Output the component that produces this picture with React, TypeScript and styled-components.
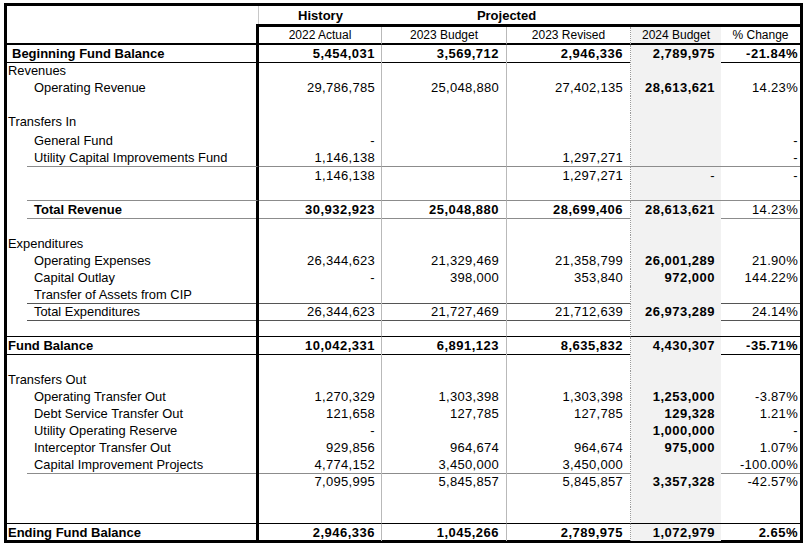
import React from 'react';
import styled, { createGlobalStyle, css } from 'styled-components';

const GlobalStyle = createGlobalStyle`
  html, body { margin: 0; padding: 0; background: #fff; }
  body {
    padding: 3px 0 0 4px;
    font-family: "Liberation Sans", Arial, sans-serif;
    color: #000;
  }
  * { box-sizing: border-box; }
`;

const COLS = '20px 232px 123px 125px 124px 90px 79px';

type ColKey = 'c' | 'd' | 'e' | 'f' | 'g';
type Rule = { w: number; c: string; partial?: boolean };

const Sheet = styled.div`
  width: 799px;
  border: 3px solid #000;
  display: flex;
  flex-direction: column;
`;

const Indent = styled.div`
  border-bottom: none;
`;

const Row = styled.div<{ $h: number; $rule?: Rule; $tall?: boolean }>`
  display: grid;
  grid-template-columns: ${COLS};
  height: ${(p) => p.$h}px;
  && > :not(${Indent}) {
    border-bottom: ${(p) => (p.$rule ? `${p.$rule.w}px solid ${p.$rule.c}` : 'none')};
    align-items: ${(p) => (p.$tall ? 'flex-end' : 'center')};
  }
`;

const TopHeaderRow = styled.div`
  display: grid;
  grid-template-columns: ${COLS};
  height: 21px;
  && > :not(:first-child) {
    border-bottom: 3px solid #000;
  }
`;

const Corner = styled.div<{ $thin?: boolean }>`
  grid-column: 1 / 3;
  border-right: ${(p) => (p.$thin ? '1px solid #c8c8c8' : '3px solid #000')};
  position: relative;
  ${(p) =>
    p.$thin &&
    css`
      &::after {
        content: '';
        position: absolute;
        right: -1px;
        bottom: 0;
        width: 3px;
        height: 3px;
        background: #000;
      }
    `}
`;

const GroupTitle = styled.div<{ $span?: number }>`
  grid-column: span ${(p) => p.$span ?? 1};
  display: flex;
  align-items: center;
  justify-content: center;
  font-size: 13px;
  font-weight: 700;
  line-height: 16px;
  padding-top: 1px;
`;

const Blank = styled.div``;

const colStyles: Record<ColKey, ReturnType<typeof css>> = {
  c: css`
    border-right: 1px solid #b9b9b9;
    padding-right: 6px;
  `,
  d: css`
    border-right: 1px solid #b9b9b9;
    padding-right: 7px;
  `,
  e: css`
    border-right: 1px dotted #9a9a9a;
    padding-right: 7px;
  `,
  f: css`
    background: #f2f2f2;
    padding-right: 6px;
  `,
  g: css`
    padding-right: 2px;
  `,
};

const ColHead = styled.div<{ $col: ColKey }>`
  ${(p) => colStyles[p.$col]};
  display: flex;
  align-items: center;
  justify-content: center;
  padding-right: 0;
  font-size: 12px;
  line-height: 16px;
`;

const Label = styled.div<{ $span?: boolean; $bold?: boolean; $pad: number }>`
  grid-column: ${(p) => (p.$span ? '1 / 3' : 'auto')};
  border-right: 3px solid #000;
  display: flex;
  padding-left: ${(p) => p.$pad}px;
  padding-top: 1px;
  font-size: ${(p) => (p.$bold ? 13 : 12.9)}px;
  font-weight: ${(p) => (p.$bold ? 700 : 400)};
  line-height: 16px;
  white-space: nowrap;
`;

const Value = styled.div<{ $col: ColKey; $bold?: boolean }>`
  ${(p) => colStyles[p.$col]};
  display: flex;
  justify-content: flex-end;
  padding-top: 1px;
  font-size: 13px;
  font-weight: ${(p) => (p.$bold ? 700 : 400)};
  letter-spacing: ${(p) => (p.$bold ? '0.5px' : '0.3px')};
  line-height: 16px;
  white-space: nowrap;
`;

type Cell = string | { t: string; b: true };
const B = (t: string): Cell => ({ t, b: true });

type Kind = 'top' | 'lead' | 'sub' | 'blank';
interface RowSpec {
  kind: Kind;
  label?: string;
  bold?: boolean;
  h: number;
  rule?: Rule;
  tall?: boolean;
  vals?: Cell[];
}

const GRAY: Rule = { w: 1, c: '#8c8c8c', partial: true };
const DARK: Rule = { w: 1, c: '#555', partial: true };
const BLACK: Rule = { w: 1, c: '#000' };

const rows: RowSpec[] = [
  {
    kind: 'lead',
    label: 'Beginning Fund Balance',
    bold: true,
    h: 17,
    rule: BLACK,
    vals: [B('5,454,031'), B('3,569,712'), B('2,946,336'), B('2,789,975'), B('-21.84%')],
  },
  { kind: 'top', label: 'Revenues', h: 17 },
  {
    kind: 'sub',
    label: 'Operating Revenue',
    h: 17,
    vals: ['29,786,785', '25,048,880', '27,402,135', B('28,613,621'), '14.23%'],
  },
  { kind: 'blank', h: 17 },
  { kind: 'top', label: 'Transfers In', h: 17 },
  { kind: 'sub', label: 'General Fund', h: 19, tall: true, vals: ['-', '', '', '', '-'] },
  {
    kind: 'sub',
    label: 'Utility Capital Improvements Fund',
    h: 18,
    rule: GRAY,
    vals: ['1,146,138', '', '1,297,271', '', '-'],
  },
  { kind: 'sub', h: 17, vals: ['1,146,138', '', '1,297,271', '-', '-'] },
  { kind: 'blank', h: 17, rule: GRAY },
  {
    kind: 'sub',
    label: 'Total Revenue',
    bold: true,
    h: 17,
    rule: GRAY,
    vals: [B('30,932,923'), B('25,048,880'), B('28,699,406'), B('28,613,621'), '14.23%'],
  },
  { kind: 'blank', h: 17 },
  { kind: 'top', label: 'Expenditures', h: 17 },
  {
    kind: 'sub',
    label: 'Operating Expenses',
    h: 17,
    vals: ['26,344,623', '21,329,469', '21,358,799', B('26,001,289'), '21.90%'],
  },
  {
    kind: 'sub',
    label: 'Capital Outlay',
    h: 17,
    vals: ['-', '398,000', '353,840', B('972,000'), '144.22%'],
  },
  { kind: 'sub', label: 'Transfer of Assets from CIP', h: 17, rule: DARK, vals: ['', '', '', '', ''] },
  {
    kind: 'sub',
    label: 'Total Expenditures',
    h: 17,
    rule: DARK,
    vals: ['26,344,623', '21,727,469', '21,712,639', B('26,973,289'), '24.14%'],
  },
  { kind: 'blank', h: 17, rule: BLACK },
  {
    kind: 'top',
    label: 'Fund Balance',
    bold: true,
    h: 17,
    rule: BLACK,
    vals: [B('10,042,331'), B('6,891,123'), B('8,635,832'), B('4,430,307'), B('-35.71%')],
  },
  { kind: 'blank', h: 17 },
  { kind: 'top', label: 'Transfers Out', h: 17 },
  {
    kind: 'sub',
    label: 'Operating Transfer Out',
    h: 17,
    vals: ['1,270,329', '1,303,398', '1,303,398', B('1,253,000'), '-3.87%'],
  },
  {
    kind: 'sub',
    label: 'Debt Service Transfer Out',
    h: 17,
    vals: ['121,658', '127,785', '127,785', B('129,328'), '1.21%'],
  },
  {
    kind: 'sub',
    label: 'Utility Operating Reserve',
    h: 17,
    vals: ['-', '', '', B('1,000,000'), '-'],
  },
  {
    kind: 'sub',
    label: 'Interceptor Transfer Out',
    h: 17,
    vals: ['929,856', '964,674', '964,674', B('975,000'), '1.07%'],
  },
  {
    kind: 'sub',
    label: 'Capital Improvement Projects',
    h: 17,
    rule: GRAY,
    vals: ['4,774,152', '3,450,000', '3,450,000', '', '-100.00%'],
  },
  {
    kind: 'sub',
    h: 17,
    vals: ['7,095,995', '5,845,857', '5,845,857', B('3,357,328'), '-42.57%'],
  },
  { kind: 'blank', h: 17 },
  { kind: 'blank', h: 17, rule: BLACK },
  {
    kind: 'top',
    label: 'Ending Fund Balance',
    bold: true,
    h: 16,
    vals: [B('2,946,336'), B('1,045,266'), B('2,789,975'), B('1,072,979'), B('2.65%')],
  },
];

const KEYS: ColKey[] = ['c', 'd', 'e', 'f', 'g'];

function DataRow({ spec }: { spec: RowSpec }) {
  const vals = spec.vals ?? ['', '', '', '', ''];
  const indented = spec.kind === 'sub' || (spec.kind === 'blank' && spec.rule?.partial);
  return (
    <Row $h={spec.h} $rule={spec.rule} $tall={spec.tall}>
      {indented ? (
        <>
          <Indent />
          <Label $pad={7} $bold={spec.bold}>
            {spec.label ?? ''}
          </Label>
        </>
      ) : (
        <Label $span $pad={spec.kind === 'lead' ? 5 : 1} $bold={spec.bold}>
          {spec.label ?? ''}
        </Label>
      )}
      {KEYS.map((k, i) => {
        const v = vals[i];
        const text = typeof v === 'string' ? v : v.t;
        const bold = typeof v !== 'string';
        return (
          <Value key={k} $col={k} $bold={bold}>
            {text}
          </Value>
        );
      })}
    </Row>
  );
}

export default function App() {
  return (
    <>
      <GlobalStyle />
      <Sheet>
        <TopHeaderRow>
          <Corner $thin />
          <GroupTitle>History</GroupTitle>
          <GroupTitle $span={2}>Projected</GroupTitle>
          <Blank />
          <Blank />
        </TopHeaderRow>
        <Row $h={18} $rule={{ w: 2, c: '#000' }}>
          <Corner />
          <ColHead $col="c">2022 Actual</ColHead>
          <ColHead $col="d">2023 Budget</ColHead>
          <ColHead $col="e">2023 Revised</ColHead>
          <ColHead $col="f">2024 Budget</ColHead>
          <ColHead $col="g">% Change</ColHead>
        </Row>
        {rows.map((r, i) => (
          <DataRow key={i} spec={r} />
        ))}
      </Sheet>
    </>
  );
}
